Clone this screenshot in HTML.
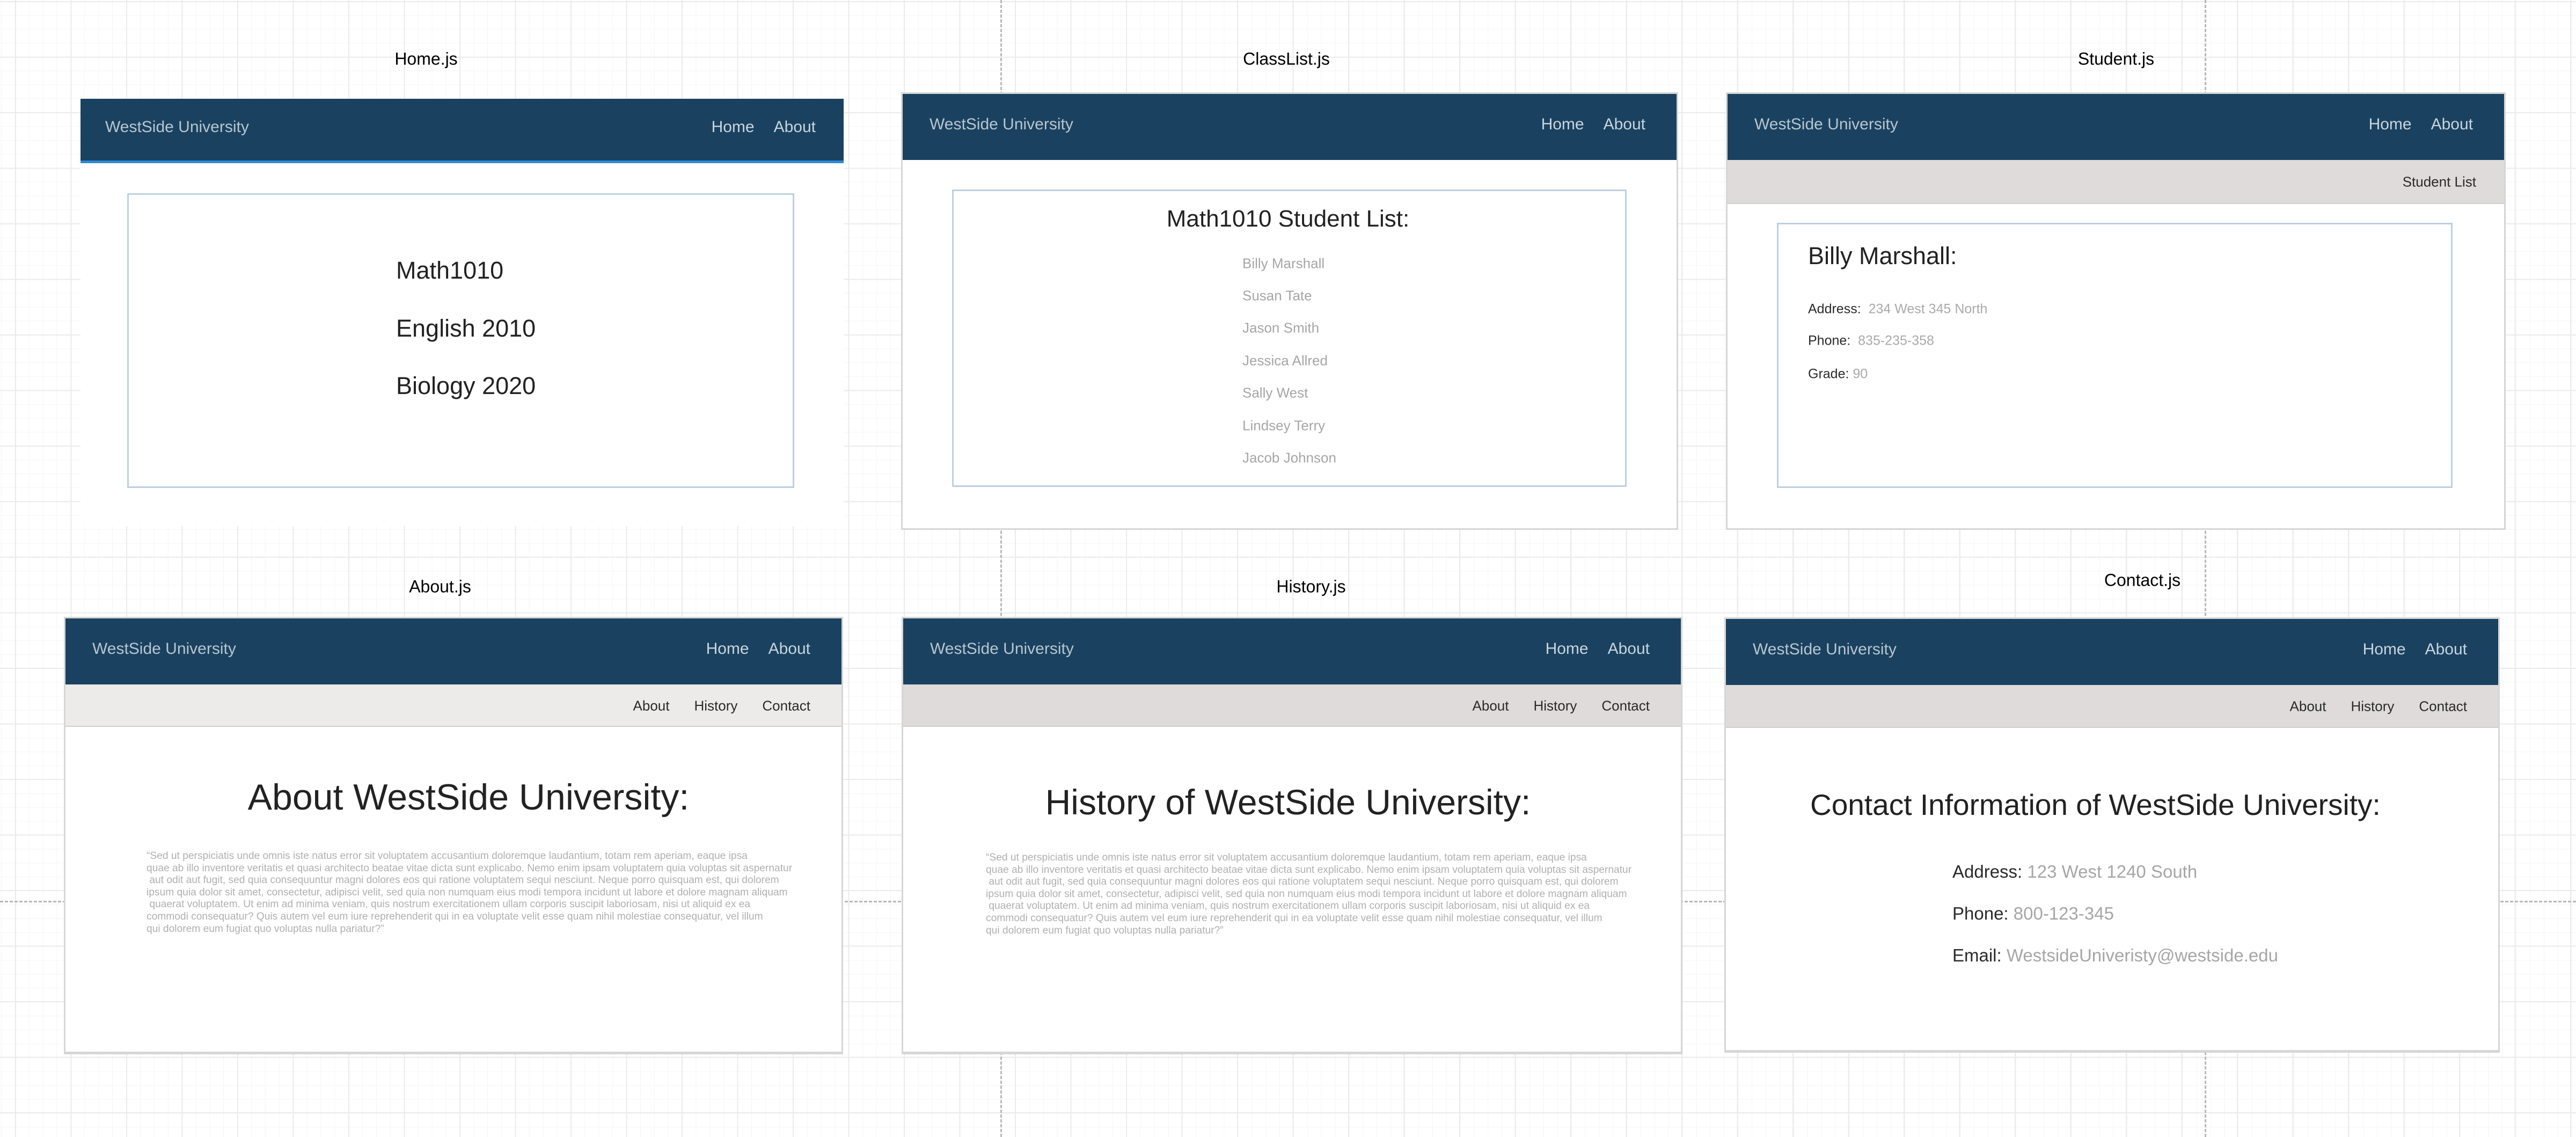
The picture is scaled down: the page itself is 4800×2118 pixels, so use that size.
<!DOCTYPE html>
<html><head><meta charset="utf-8">
<style>
*{margin:0;padding:0;box-sizing:border-box}
html,body{width:4800px;height:2118px;overflow:hidden}
body{position:relative;font-family:"Liberation Sans",Arial,sans-serif;background-color:#fff;
background-image:
linear-gradient(to right,#ebebeb 2px,transparent 2px),
linear-gradient(to bottom,#ebebeb 2px,transparent 2px),
linear-gradient(to right,#f5f5f5 1px,transparent 1px),
linear-gradient(to bottom,#f5f5f5 1px,transparent 1px);
background-size:103.5px 103.5px,103.5px 103.5px,25.9px 25.9px,25.9px 25.9px;
background-position:28px 2px,28px 2px,2px 2px,2px 2px;}
.lbl{position:absolute;font-size:32px;color:#000;transform:translate(-50%,-50%);white-space:nowrap}
.panel{position:absolute;background:#fff;border:3px solid #d6d6d6;overflow:hidden}
.nav{position:absolute;left:0;right:0;top:0;height:123px;background:#1a4260}
.brand{position:absolute;left:50px;top:57px;transform:translateY(-50%);font-size:30px;color:#b8c5d0;white-space:nowrap}
.links{position:absolute;right:58px;top:57px;transform:translateY(-50%);font-size:30px;color:#c9d4dd;white-space:nowrap}
.links span{margin-left:36px}
.sub{position:absolute;left:0;right:0;top:123px;height:80px;background:#dedbda;border-bottom:2px solid #cfcfcf}
.sublinks{position:absolute;right:58px;top:40px;transform:translateY(-50%);font-size:26px;color:#2a2a2a;white-space:nowrap}
.sublinks span{margin-left:46px}
.card{position:absolute;border:3px solid #bdd0e0;background:#fff}
.t{position:absolute;white-space:nowrap;transform:translateY(-50%)}
.c{transform:translate(-50%,-50%)}
.lorem{position:absolute;font-size:19.2px;color:#b0b0b0;line-height:22.6px;white-space:pre}
.dv{position:absolute;width:0;border-left:3px dashed #b8b8b8}
.dh{position:absolute;height:0;border-top:3px dashed #b8b8b8}
</style></head><body>

<div class="dv" style="left:1864px;top:0;height:2118px"></div>
<div class="dv" style="left:4108px;top:0;height:2118px"></div>
<div class="dh" style="left:0;top:1678px;width:4800px"></div>

<div class="lbl" style="left:794px;top:110px">Home.js</div>
<div class="lbl" style="left:2397px;top:110px">ClassList.js</div>
<div class="lbl" style="left:3943px;top:110px">Student.js</div>
<div class="lbl" style="left:820px;top:1093px">About.js</div>
<div class="lbl" style="left:2443px;top:1093px">History.js</div>
<div class="lbl" style="left:3992px;top:1081px">Contact.js</div>

<div class="panel" style="left:150px;top:184px;width:1422px;height:796px;border:none">
  <div class="nav" style="height:120px;border-bottom:5px solid #2d8bd4">
    <div class="brand" style="left:46px;top:53px">WestSide University</div>
    <div class="links" style="right:52px;top:53px"><span>Home</span><span>About</span></div>
  </div>
  <div class="card" style="left:87px;top:176px;width:1243px;height:549px">
    <div class="t" style="left:498px;top:141px;font-size:45px;color:#222">Math1010</div>
    <div class="t" style="left:498px;top:249px;font-size:45px;color:#222">English 2010</div>
    <div class="t" style="left:498px;top:356px;font-size:45px;color:#222">Biology 2020</div>
  </div>
</div>

<div class="panel" style="left:1679px;top:172px;width:1448px;height:815px">
  <div class="nav"><div class="brand">WestSide University</div><div class="links"><span>Home</span><span>About</span></div></div>
  <div class="card" style="left:92px;top:178px;width:1257px;height:554px">
    <div class="t c" style="left:623px;top:52px;font-size:44px;color:#222">Math1010 Student List:</div>
    <div class="t" style="left:538px;top:135px;font-size:26px;color:#a6a6a6">Billy Marshall</div>
    <div class="t" style="left:538px;top:195px;font-size:26px;color:#a6a6a6">Susan Tate</div>
    <div class="t" style="left:538px;top:255px;font-size:26px;color:#a6a6a6">Jason Smith</div>
    <div class="t" style="left:538px;top:316px;font-size:26px;color:#a6a6a6">Jessica Allred</div>
    <div class="t" style="left:538px;top:376px;font-size:26px;color:#a6a6a6">Sally West</div>
    <div class="t" style="left:538px;top:437px;font-size:26px;color:#a6a6a6">Lindsey Terry</div>
    <div class="t" style="left:538px;top:497px;font-size:26px;color:#a6a6a6">Jacob Johnson</div>
  </div>
</div>

<div class="panel" style="left:3216px;top:172px;width:1453px;height:815px">
  <div class="nav"><div class="brand">WestSide University</div><div class="links"><span>Home</span><span>About</span></div></div>
  <div class="sub" style="height:82px"><div class="sublinks" style="right:52px;top:41px">Student List</div></div>
  <div class="card" style="left:92px;top:240px;width:1259px;height:494px">
    <div class="t" style="left:55px;top:59px;font-size:45px;color:#222">Billy Marshall:</div>
    <div class="t" style="left:55px;top:158px;font-size:25px;color:#2a2a2a">Address:&nbsp; <span style="color:#aaa">234 West 345 North</span></div>
    <div class="t" style="left:55px;top:217px;font-size:25px;color:#2a2a2a">Phone:&nbsp; <span style="color:#aaa">835-235-358</span></div>
    <div class="t" style="left:55px;top:279px;font-size:25px;color:#2a2a2a">Grade: <span style="color:#aaa">90</span></div>
  </div>
</div>

<div class="panel" style="left:119px;top:1149px;width:1452px;height:815px;border-bottom-width:5px">
  <div class="nav"><div class="brand">WestSide University</div><div class="links"><span>Home</span><span>About</span></div></div>
  <div class="sub" style="background:#ecebea;height:79px"><div class="sublinks"><span>About</span><span>History</span><span>Contact</span></div></div>
  <div class="t c" style="left:751px;top:333px;font-size:68px;color:#222">About WestSide University:</div>
  <div class="lorem" style="left:151px;top:432px">“Sed ut perspiciatis unde omnis iste natus error sit voluptatem accusantium doloremque laudantium, totam rem aperiam, eaque ipsa
quae ab illo inventore veritatis et quasi architecto beatae vitae dicta sunt explicabo. Nemo enim ipsam voluptatem quia voluptas sit aspernatur
 aut odit aut fugit, sed quia consequuntur magni dolores eos qui ratione voluptatem sequi nesciunt. Neque porro quisquam est, qui dolorem
ipsum quia dolor sit amet, consectetur, adipisci velit, sed quia non numquam eius modi tempora incidunt ut labore et dolore magnam aliquam
 quaerat voluptatem. Ut enim ad minima veniam, quis nostrum exercitationem ullam corporis suscipit laboriosam, nisi ut aliquid ex ea
commodi consequatur? Quis autem vel eum iure reprehenderit qui in ea voluptate velit esse quam nihil molestiae consequatur, vel illum
qui dolorem eum fugiat quo voluptas nulla pariatur?”</div>
</div>

<div class="panel" style="left:1680px;top:1149px;width:1455px;height:815px;border-bottom-width:5px">
  <div class="nav"><div class="brand">WestSide University</div><div class="links"><span>Home</span><span>About</span></div></div>
  <div class="sub" style="height:79px"><div class="sublinks"><span>About</span><span>History</span><span>Contact</span></div></div>
  <div class="t c" style="left:717px;top:342px;font-size:66px;color:#222">History of WestSide University:</div>
  <div class="lorem" style="left:154px;top:435px">“Sed ut perspiciatis unde omnis iste natus error sit voluptatem accusantium doloremque laudantium, totam rem aperiam, eaque ipsa
quae ab illo inventore veritatis et quasi architecto beatae vitae dicta sunt explicabo. Nemo enim ipsam voluptatem quia voluptas sit aspernatur
 aut odit aut fugit, sed quia consequuntur magni dolores eos qui ratione voluptatem sequi nesciunt. Neque porro quisquam est, qui dolorem
ipsum quia dolor sit amet, consectetur, adipisci velit, sed quia non numquam eius modi tempora incidunt ut labore et dolore magnam aliquam
 quaerat voluptatem. Ut enim ad minima veniam, quis nostrum exercitationem ullam corporis suscipit laboriosam, nisi ut aliquid ex ea
commodi consequatur? Quis autem vel eum iure reprehenderit qui in ea voluptate velit esse quam nihil molestiae consequatur, vel illum
qui dolorem eum fugiat quo voluptas nulla pariatur?”</div>
</div>

<div class="panel" style="left:3213px;top:1150px;width:1445px;height:811px;border-bottom-width:5px">
  <div class="nav"><div class="brand">WestSide University</div><div class="links"><span>Home</span><span>About</span></div></div>
  <div class="sub" style="height:80px"><div class="sublinks"><span>About</span><span>History</span><span>Contact</span></div></div>
  <div class="t" style="left:157px;top:346px;font-size:55px;color:#222">Contact Information of WestSide University:</div>
  <div class="t" style="left:422px;top:471px;font-size:33px;color:#2a2a2a">Address: <span style="color:#a6a6a6">123 West 1240 South</span></div>
  <div class="t" style="left:422px;top:549px;font-size:33px;color:#2a2a2a">Phone: <span style="color:#a6a6a6">800-123-345</span></div>
  <div class="t" style="left:422px;top:627px;font-size:33px;color:#2a2a2a">Email: <span style="color:#a6a6a6">WestsideUniveristy@westside.edu</span></div>
</div>

</body></html>
